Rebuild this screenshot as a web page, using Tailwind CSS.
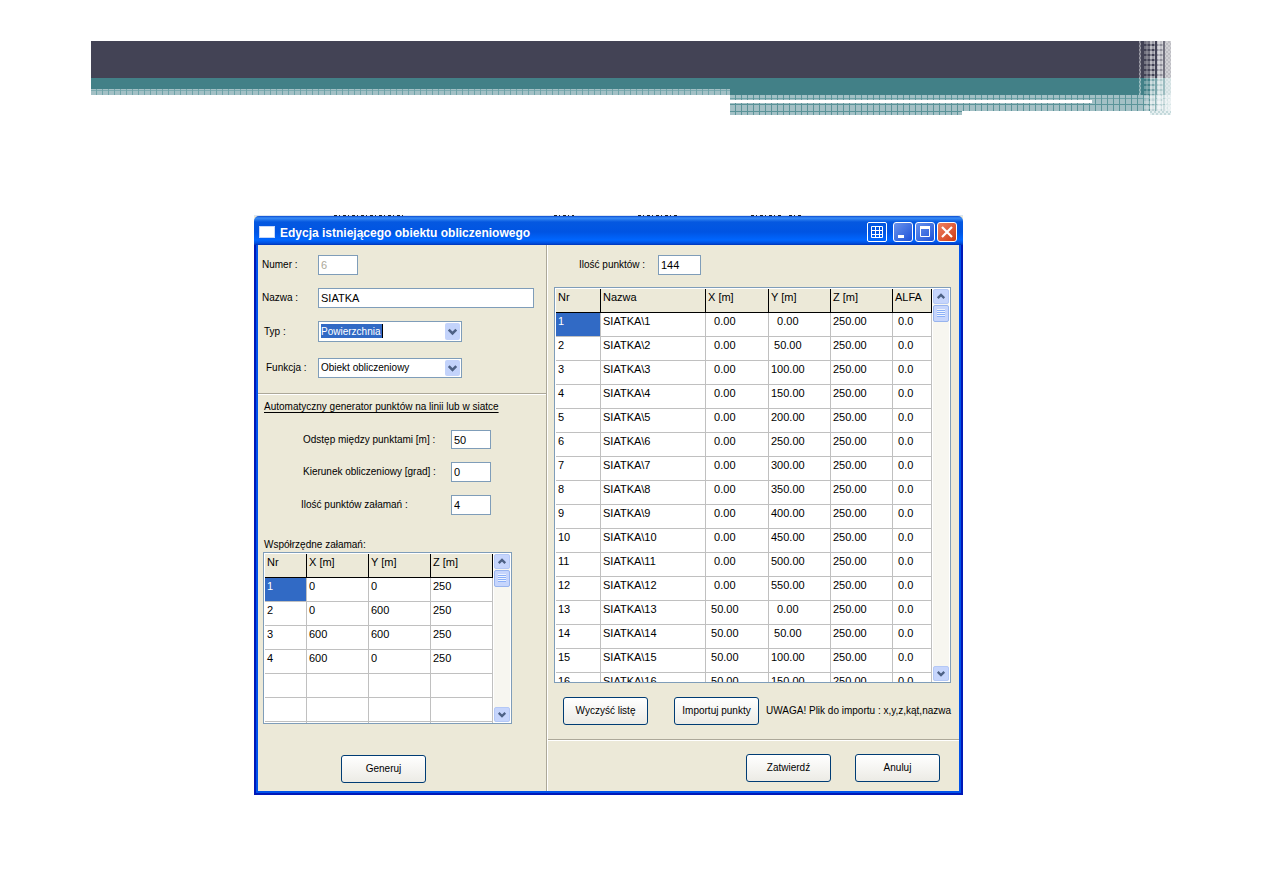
<!DOCTYPE html>
<html lang="pl">
<head>
<meta charset="utf-8">
<title>Edycja istniejącego obiektu obliczeniowego</title>
<script src="https://cdn.jsdelivr.net/npm/@tailwindcss/browser@4"></script>
</head>
<body class="bg-white text-black text-[10px] leading-[14px] font-['Liberation_Sans',Arial,sans-serif]">
<svg class="hidden">
  <defs>
    <symbol id="up" viewBox="0 0 16 16"><path d="M4 10l4-4 4 4" fill="none" stroke="#4d6185" stroke-width="2.8"/></symbol>
    <symbol id="down" viewBox="0 0 16 16"><path d="M4 6l4 4 4-4" fill="none" stroke="#4d6185" stroke-width="2.8"/></symbol>
  </defs>
</svg>

<header class="relative ml-[91px] mr-[92px] mt-[41px]">
  <div class="h-[37px] bg-[#434355]"></div>
  <div class="flex">
    <div class="w-[59.2%]">
      <div class="h-[11px] bg-[#428087]"></div>
      <div class="h-[6px] bg-[#a3c0c5] bg-[linear-gradient(90deg,transparent_5px,#6fa3a8_5px),linear-gradient(transparent_1px,#7dabb0_1px,#7dabb0_2px,transparent_2px)] bg-[size:6px_6px]"></div>
    </div>
    <div class="flex-1">
      <div class="h-[17px] bg-[#428087]"></div>
      <div class="h-[5px] bg-[#a3c0c5] bg-[linear-gradient(90deg,transparent_5px,#5b9499_5px),linear-gradient(transparent_3px,#6fa3a8_3px,#6fa3a8_4px,transparent_4px)] bg-[size:6px_6px]"></div>
      <div class="h-[3px] bg-[#a3c0c5] bg-[linear-gradient(90deg,transparent_5px,#5b9499_5px)] bg-[size:6px_6px]"><div class="h-full w-[82%] bg-white"></div></div>
      <div class="h-[8px] bg-[#a3c0c5] bg-[linear-gradient(90deg,transparent_5px,#5b9499_5px),linear-gradient(transparent_1px,#5b9499_1px,#5b9499_2px,transparent_2px)] bg-[size:6px_8px]"></div>
      <div class="h-[4px] w-[232px] bg-[#a3c0c5] bg-[linear-gradient(90deg,transparent_5px,#5b9499_5px),linear-gradient(#5b9499_1px,transparent_1px)] bg-[size:6px_6px]"></div>
    </div>
  </div>
  <svg class="absolute right-0 top-0" width="33" height="74" viewBox="0 0 33 74">
    <defs>
      <pattern id="dots" width="4" height="4" patternUnits="userSpaceOnUse"><path d="M0 0h2v2H0zM2 2h2v2H2z" fill="#fff" fill-opacity=".6"/></pattern>
      <pattern id="weave" width="4" height="5" patternUnits="userSpaceOnUse"><path d="M0 0h4v3H0z" fill="#fff" fill-opacity=".45"/><path d="M0 0h2v5H0z" fill="#fff" fill-opacity=".35"/></pattern>
    </defs>
    <path d="M1 0h2v54H1z" fill="#fff" fill-opacity=".25"/>
    <path d="M1 0h2v54H1z" fill="url(#dots)" fill-opacity=".5"/>
    <path d="M6 0h6v70H6z" fill="url(#weave)" opacity=".55"/>
    <path d="M12 0h5v70h-5z" fill="url(#weave)"/>
    <path d="M19 0h6v70h-6z" fill="#fff" fill-opacity=".4"/>
    <path d="M19 0h6v70h-6z" fill="url(#weave)"/>
    <path d="M25 0h2v70h-2z" fill="#fff" fill-opacity=".25"/>
    <path d="M27 0h6v70h-6z" fill="#fff" fill-opacity=".65"/>
    <path d="M27 0h6v70h-6z" fill="url(#dots)" opacity=".5"/>
    <path d="M12 37h21v33H12z" fill="#fff" fill-opacity=".3"/>
    <path d="M12 70h21v4H12z" fill="#c4d9db"/>
    <path d="M12 70h21v4H12z" fill="url(#dots)"/>
  </svg>
</header>

<main class="ml-[254px] mr-[300px] mt-[100px]">
  <svg class="block h-px w-full bg-[#dbe6f2]" viewBox="0 0 709 1" preserveAspectRatio="none" aria-hidden="true"><path d="M80 .5h70M300 .5h20M384 .5h40M497 .5h30M535 .5h12" stroke="#222" stroke-dasharray="3 2 1 3"/></svg>
  <section aria-labelledby="title" class="bg-[#ece9d8]">
    <div class="flex h-[29px] items-center rounded-t-[5px] pl-[5px] pr-[6px] bg-[linear-gradient(#0a4ad0_0px,#3a8cf5_2px,#0558e0_6px,#0054e3_16px,#0066ff_24px,#0050e0_27px,#0033b8_29px)]">
      <span class="mr-[5px] mt-[3px] h-[12px] w-[16px] border border-[#c8d8f8] bg-white"></span>
      <h1 id="title" class="mt-[5px] min-w-0 flex-1 whitespace-nowrap text-[12px] leading-[16px] font-bold text-white">Edycja istniejącego obiektu obliczeniowego</h1>
      <button aria-label="Siatka" class="mt-[3px] mr-[6px] size-[20px] rounded-[2px] border border-white"><svg viewBox="0 0 18 18" fill="none" stroke="#fff"><path d="M3.500 3.500h11v11h-11zM7.500 3v11M11.500 3v11M3 7.500h11M3 11.500h11"/></svg></button>
      <button aria-label="Minimalizuj" class="mt-[3px] mr-[2px] size-[20px] rounded-[3px] border border-white bg-linear-to-br from-[#6a92ec] to-[#1c4fd8]"><svg viewBox="0 0 18 18"><path d="M4 12h6v3H4z" fill="#fff"/></svg></button>
      <button aria-label="Maksymalizuj" class="mt-[3px] mr-[2px] size-[20px] rounded-[3px] border border-white bg-linear-to-br from-[#6a92ec] to-[#1c4fd8]"><svg viewBox="0 0 18 18"><path d="M4.500 5v8.500h9V5" fill="none" stroke="#fff"/><path d="M4 3h10v3H4z" fill="#fff"/></svg></button>
      <button aria-label="Zamknij" class="mt-[3px] size-[20px] rounded-[3px] border border-white bg-linear-to-br from-[#ee8060] to-[#d03808]"><svg viewBox="0 0 18 18"><path d="M4 4l10 10M14 4L4 14" stroke="#fff" stroke-width="2.200"/></svg></button>
    </div>

    <div class="border-x-2 border-b-2 border-[#0019b8]">
    <div class="flex border-x-2 border-b-2 border-[#0052ea]">
      <div class="flex w-[289px] shrink-0 flex-col border-r border-[#aca899]">
        <form class="flex h-[149px] flex-col border-b border-[#aca899] pt-[10px]">
          <div class="mb-[13px] flex h-[20px] items-center"><label for="numer" class="w-[60px] pl-1">Numer :</label><input id="numer" disabled value="6" class="h-full w-[40px] border border-[#7f9db9] bg-white px-0.5 text-[11px] text-[#aca899]"></div>
          <div class="mb-[13px] flex h-[20px] items-center"><label for="nazwa" class="w-[60px] pl-1">Nazwa :</label><input id="nazwa" value="SIATKA" class="h-full w-[216px] border border-[#7f9db9] bg-white px-0.5 text-[11px]"></div>
          <div class="mb-[16px] flex h-[21px] items-center"><label for="typ" class="w-[60px] pl-1.5">Typ :</label>
            <div class="relative h-full w-[144px]"><select id="typ" class="size-full appearance-none border border-[#7f9db9] bg-white px-0.5 text-white bg-[linear-gradient(90deg,#316ac5_61px,#000_61px,#000_62px,transparent_62px)] bg-no-repeat bg-[position:2px_2px] bg-[size:62px_14px]"><option>Powierzchnia</option></select><svg class="pointer-events-none absolute right-0.5 top-0.5 h-[17px] w-[15px] rounded-[2px] bg-[#c3d3fb]"><use href="#down"/></svg></div></div>
          <div class="flex h-[20px] items-center"><label for="funkcja" class="w-[60px] pl-2">Funkcja :</label>
            <div class="relative h-full w-[144px]"><select id="funkcja" class="size-full appearance-none border border-[#7f9db9] bg-white px-0.5"><option>Obiekt obliczeniowy</option></select><svg class="pointer-events-none absolute right-0.5 top-0.5 h-[16px] w-[15px] rounded-[2px] bg-[#c3d3fb]"><use href="#down"/></svg></div></div>
        </form>

        <div class="border-t border-white pl-[5px] pt-[5px]">
          <h2 class="pl-px underline underline-offset-2">Automatyczny generator punktów na linii lub w siatce</h2>
          <div class="mb-[13px] mt-[16px] flex h-[19px] items-center pl-[40px]"><label for="odstep" class="w-[148px] whitespace-nowrap">Odstęp między punktami [m] :</label><input id="odstep" value="50" class="h-full w-[40px] border border-[#7f9db9] bg-white px-0.5 text-[11px]"></div>
          <div class="mb-[13px] flex h-[20px] items-center pl-[40px]"><label for="kier" class="w-[148px] whitespace-nowrap">Kierunek obliczeniowy [grad] :</label><input id="kier" value="0" class="h-full w-[40px] border border-[#7f9db9] bg-white px-0.5 text-[11px]"></div>
          <div class="flex h-[20px] items-center pl-[38px]"><label for="zal" class="w-[150px] whitespace-nowrap">Ilość punktów załamań :</label><input id="zal" value="4" class="h-full w-[40px] border border-[#7f9db9] bg-white px-0.5 text-[11px]"></div>
          <h2 id="wsp" class="mt-[23px] pl-px">Współrzędne załamań:</h2>
          <div class="flex h-[172px] w-[249px] overflow-hidden border border-[#7f9db9] bg-white p-px">
            <table aria-labelledby="wsp" class="w-[228px] table-fixed border-separate border-spacing-0 self-start text-left text-[11px]">
              <colgroup><col class="w-[42px]"><col class="w-[62px]"><col class="w-[62px]"><col class="w-[62px]"></colgroup>
              <thead id="head1"></thead><tbody id="body1"></tbody>
            </table>
            <div class="ml-px flex w-[16px] flex-col bg-[#f7f6f0]">
              <button aria-label="W górę" class="h-[15px] rounded-[2px] border border-[#b4c8f6] bg-[#c6d5fc]"><svg class="size-full"><use href="#up"/></svg></button>
              <div class="mt-px h-[17px] rounded-[2px] border border-[#98b4ee] bg-[#c6d5fc] px-[3px] pt-[3px]"><div class="h-[8px] bg-[repeating-linear-gradient(#eef4fe_0px,#eef4fe_1px,#8cb0f8_1px,#8cb0f8_2px)]"></div></div>
              <button aria-label="W dół" class="mt-auto h-[15px] rounded-[2px] border border-[#b4c8f6] bg-[#c6d5fc]"><svg class="size-full"><use href="#down"/></svg></button>
            </div>
          </div>
          <button class="mb-[8px] ml-[78px] mt-[31px] h-[28px] w-[85px] rounded-[3px] border border-[#003c74] bg-linear-to-b from-white to-[#ecebe5]">Generuj</button>
        </div>
      </div>

      <div class="flex min-w-0 flex-1 flex-col border-l border-white">
        <div class="pl-[6px] pt-[10px]">
          <div class="flex h-[20px] items-center pl-[25px]"><label for="ilosc" class="w-[79px] whitespace-nowrap">Ilość punktów :</label><input id="ilosc" value="144" class="h-full w-[43px] border border-[#7f9db9] bg-white px-0.5 text-[11px]"></div>
          <div class="mr-[8px] mt-[12px] flex h-[396px] overflow-hidden border border-[#7f9db9] bg-white p-px">
            <table aria-label="Punkty" class="flex-1 table-fixed border-separate border-spacing-0 self-start text-left text-[11px]">
              <colgroup><col class="w-[45px]"><col class="w-[105px]"><col class="w-[63px]"><col class="w-[62px]"><col class="w-[62px]"><col></colgroup>
              <thead id="head2"></thead><tbody id="body2"></tbody>
            </table>
            <div class="ml-px flex w-[16px] flex-col bg-[#f7f6f0]">
              <button aria-label="W górę" class="h-[15px] rounded-[2px] border border-[#b4c8f6] bg-[#c6d5fc]"><svg class="size-full"><use href="#up"/></svg></button>
              <div class="mt-px h-[17px] rounded-[2px] border border-[#98b4ee] bg-[#c6d5fc] px-[3px] pt-[3px]"><div class="h-[8px] bg-[repeating-linear-gradient(#eef4fe_0px,#eef4fe_1px,#8cb0f8_1px,#8cb0f8_2px)]"></div></div>
              <button aria-label="W dół" class="mt-auto h-[15px] rounded-[2px] border border-[#b4c8f6] bg-[#c6d5fc]"><svg class="size-full"><use href="#down"/></svg></button>
            </div>
          </div>
          <div class="mt-[14px] flex items-center pl-[9px]">
            <button class="mr-[26px] h-[28px] w-[85px] shrink-0 rounded-[3px] border border-[#003c74] bg-linear-to-b from-white to-[#ecebe5]">Wyczyść listę</button>
            <button class="mr-[7px] h-[28px] w-[85px] shrink-0 rounded-[3px] border border-[#003c74] bg-linear-to-b from-white to-[#ecebe5]">Importuj punkty</button>
            <p class="whitespace-nowrap">UWAGA! Plik do importu : x,y,z,kąt,nazwa</p>
          </div>
        </div>
        <div class="mt-[14px] flex justify-end gap-[24px] border-t border-[#aca899] pr-[19px] pt-[14px] shadow-[inset_0_1px_0_white]">
          <button class="h-[28px] w-[85px] rounded-[3px] border border-[#003c74] bg-linear-to-b from-white to-[#ecebe5]">Zatwierdź</button>
          <button class="h-[28px] w-[85px] rounded-[3px] border border-[#003c74] bg-linear-to-b from-white to-[#ecebe5]">Anuluj</button>
        </div>
      </div>
    </div>
    </div>
  </section>
</main>

<script>
function fill(n, heads, rows) {
  document.getElementById('head' + n).innerHTML = '<tr>' + heads.map(h =>
    `<th scope="col" class="h-[24px] whitespace-nowrap border-b border-r border-black bg-[#ece9d8] pl-0.5 pt-px align-top font-normal">${h}</th>`).join('') + '</tr>';
  document.getElementById('body' + n).innerHTML = rows.map((r, i) => '<tr>' + r.map((c, j) =>
    `<td class="h-[24px] whitespace-pre border-b border-r border-[#c0c0c0] pl-0.5 pt-px align-top ${i === 0 && j === 0 ? 'bg-[#316ac5] text-white' : ''}">${c}</td>`).join('') + '</tr>').join('');
}
fill(1, ['Nr', 'X [m]', 'Y [m]', 'Z [m]'],
  [['1', '0', '0', '250'], ['2', '0', '600', '250'], ['3', '600', '600', '250'], ['4', '600', '0', '250'], ['', '', '', ''], ['', '', '', ''], ['', '', '', '']]);
const points = [];
for (let i = 0; i < 16; i++) {
  const x = i < 12 ? 0 : 50, y = (i % 12) * 50;
  points.push([String(i + 1), 'SIATKA\\' + (i + 1), x.toFixed(2).padStart(6), y.toFixed(2).padStart(6), '250.00', ' 0.0']);
}
fill(2, ['Nr', 'Nazwa', 'X [m]', 'Y [m]', 'Z [m]', 'ALFA'], points);
</script>
</body>
</html>
